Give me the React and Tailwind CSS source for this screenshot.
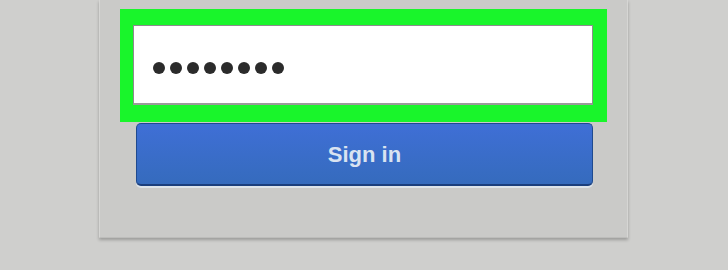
import React from "react";

function App() {
  const dots = [0, 1, 2, 3, 4, 5, 6, 7];
  return (
    <div className="w-[728px] h-[270px] overflow-hidden bg-[#cfcfcd] font-['Liberation_Sans',Arial,sans-serif]">
      <div className="ml-[99px] w-[529px] h-[238px] bg-[#cacac8] border-x border-[#d6d6d4] border-b border-b-[#bdbdbb] shadow-[0_2px_3px_rgba(0,0,0,0.25)] pt-[9px]">
        {/* highlighted password field */}
        <div className="ml-[20px] w-[487px] h-[113px] bg-[#19f52b] pt-[16px] pl-[13px]">
          <div className="w-[460px] h-[80px] bg-white border border-[#8c8c8c] border-b-2 border-b-[#9a9a9a] flex items-center pl-[19px] pt-[6px] gap-[5px]">
            {dots.map((d) => (
              <span key={d} className="w-[12px] h-[12px] rounded-full bg-[#2b2b2b]" />
            ))}
          </div>
        </div>

        {/* sign in button */}
        <div className="ml-[36px] w-[457px] h-[63px] mt-px rounded-[5px] bg-gradient-to-b from-[#3f6fd6] to-[#356bbd] border border-[#1f4a8f] border-b-2 border-b-[#1b3f7d] flex items-center justify-center shadow-[0_2px_0_#dde4ea]">
          <span className="text-[22px] font-bold text-[#d9e3f1]">Sign in</span>
        </div>
      </div>
    </div>
  );
}

export default App;
